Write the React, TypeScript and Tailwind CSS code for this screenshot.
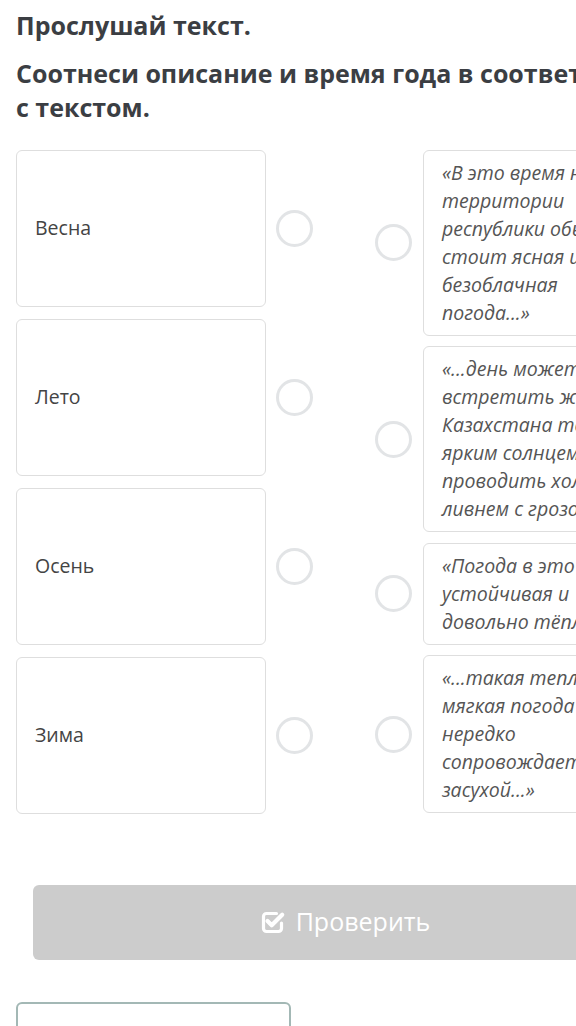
import React from "react";

const leftItems = ["Весна", "Лето", "Осень", "Зима"];

const rightItems: string[][] = [
  ["«В это время на", "территории", "республики обычно", "стоит ясная и", "безоблачная", "погода...»"],
  ["«...день может", "встретить жителей", "Казахстана тёплым", "ярким солнцем, а", "проводить холодным", "ливнем с грозой...»"],
  ["«Погода в это время", "устойчивая и", "довольно тёплая...»"],
  ["«...такая теплая и", "мягкая погода", "нередко", "сопровождается", "засухой...»"],
];

function Circle() {
  return <div className="w-[37px] h-[37px] shrink-0 rounded-full border-[3.5px] border-[#e2e4e6]" />;
}

function CheckIcon() {
  return (
    <svg width="26" height="24" viewBox="0 0 26 24" fill="none">
      <path
        d="M16.5 3.5H6.5a3 3 0 0 0-3 3v12a3 3 0 0 0 3 3h12a3 3 0 0 0 3-3v-5.5"
        stroke="white"
        strokeWidth="3.2"
        strokeLinecap="round"
      />
      <path d="M7.5 11l4.2 4.2 10.5-10.5" stroke="white" strokeWidth="4.2" strokeLinecap="round" strokeLinejoin="round" />
    </svg>
  );
}

export default function App() {
  return (
    <div className="w-[576px] h-[1026px] overflow-hidden bg-white font-['Open_Sans','DejaVu_Sans',sans-serif]">
      <div className="w-[720px] px-4 pt-[9px]">
        <h1 className="text-[25px] leading-[32px] font-bold text-[#3b3e43]">Прослушай текст.</h1>
        <h2 className="mt-[15px] text-[25px] leading-[34px] font-bold text-[#3b3e43] whitespace-nowrap">
          Соотнеси описание и время года в соответствии
          <br />с текстом.
        </h2>
        <div className="mt-[25.5px] flex items-start gap-[62px]">
          <div className="flex flex-col gap-[12px]">
            {leftItems.map((t) => (
              <div key={t} className="flex items-center gap-[10px]">
                <div className="w-[250px] h-[157px] rounded-[6px] border border-[#dedede] flex items-center px-[18px] text-[19.5px] text-[#444]">
                  {t}
                </div>
                <Circle />
              </div>
            ))}
          </div>
          <div className="flex flex-col gap-[10.5px]">
            {rightItems.map((lines, i) => (
              <div key={i} className="flex items-center gap-[11px]">
                <Circle />
                <div className="w-[240px] rounded-[6px] border border-[#dedede] px-[18px] py-[8px] text-[19.5px] leading-[28px] italic text-[#555] whitespace-nowrap">
                  {lines.map((l, j) => (
                    <div key={j}>{l}</div>
                  ))}
                </div>
              </div>
            ))}
          </div>
        </div>
        <div className="mt-[71px] ml-[17px] w-[624px] h-[75px] rounded-[6px] bg-[#cccccc] flex items-center justify-center gap-[10px] text-white text-[25px]">
          <CheckIcon />
          <span>Проверить</span>
        </div>
        <div className="mt-[42px] w-[275px] h-[60px] rounded-[6px] border-2 border-[#a3b8b5]" />
      </div>
    </div>
  );
}
